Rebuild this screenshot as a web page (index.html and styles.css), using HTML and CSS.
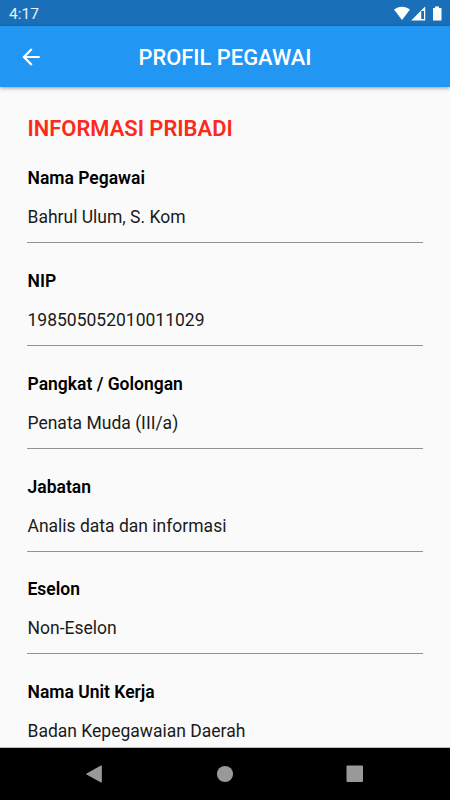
FILE: index.html
```html
<!DOCTYPE html>
<html lang="id">
<head>
<meta charset="utf-8">
<title>Profil Pegawai</title>
<link rel="stylesheet" href="styles.css">
</head>
<body>
<div class="screen">
  <div class="status">
    <span class="clock">4:17</span>
    <svg class="status-icons" width="50" height="16" viewBox="0 0 50 16" fill="#fff">
      <path d="M1 4.100C5.500.2 12.500.2 17 4.100L9 14.500z"/>
      <path fill-rule="evenodd" d="M32.200 1v14H18.200zM28.200 5.500V13.500H31V5.500z"/>
      <path d="M40 2.500h2V1h4v1.500h2.500V15H40z"/>
    </svg>
  </div>
  <header class="appbar">
    <svg class="back" width="26" height="26" viewBox="0 0 24 24" fill="#fff"><path d="M20 11H7.830l5.590-5.590L12 4l-8 8 8 8 1.410-1.410L7.830 13H20v-2z"/></svg>
    <h1 class="title">PROFIL PEGAWAI</h1>
  </header>
  <main class="content">
    <h2 class="section">INFORMASI PRIBADI</h2>
    <div class="field"><div class="label">Nama Pegawai</div><div class="value">Bahrul Ulum, S. Kom</div></div>
    <div class="field"><div class="label">NIP</div><div class="value">198505052010011029</div></div>
    <div class="field"><div class="label">Pangkat / Golongan</div><div class="value">Penata Muda (III/a)</div></div>
    <div class="field"><div class="label">Jabatan</div><div class="value">Analis data dan informasi</div></div>
    <div class="field"><div class="label">Eselon</div><div class="value">Non-Eselon</div></div>
    <div class="field"><div class="label">Nama Unit Kerja</div><div class="value">Badan Kepegawaian Daerah</div></div>
  </main>
  <nav class="navbar">
    <svg width="18" height="18" viewBox="0 0 18 18" fill="#999"><path d="M15.300.8V17.200L.6 9z" stroke="#999" stroke-linejoin="round"/></svg>
    <svg width="18" height="18" viewBox="0 0 18 18" fill="#999"><circle cx="9" cy="9" r="8.100"/></svg>
    <svg width="18" height="18" viewBox="0 0 18 18" fill="#999"><rect x=".5" y=".5" width="16.500" height="16.500" rx="1"/></svg>
  </nav>
</div>
</body>
</html>
```
FILE: styles.css
```css
* { box-sizing: border-box; margin: 0; }
body { font-family: Roboto, sans-serif; background: #fafafa; }
.screen { width: 450px; height: 800px; display: flex; flex-direction: column; overflow: hidden; }
.status { height: 26px; flex: none; background: #1a70b8; color: #e8f1f8; display: flex; justify-content: space-between; align-items: center; padding: 0 7px 0 9px; }
.status-icons { margin: -1px 0 0; transform: translateY(.5px); }
.clock { font-size: 15.500px; padding-top: 2px; }
.appbar { height: 61px; flex: none; background: #2196f3; color: #fff; display: grid; grid-template-columns: 26px 1fr 26px; align-items: center; padding: 0 18px; box-shadow: 0 1px 4px rgba(0,0,0,.4); z-index: 1; }
.title { font-size: 21.900px; font-weight: 500; text-align: center; padding-top: 2px; }
.content { flex: 1; min-height: 0; overflow: hidden; padding: 29px 27px 0; border-bottom: 1px solid #bbb; }
.section { font-size: 21.900px; line-height: 26px; font-weight: 600; color: #fb2b1c; margin-bottom: 26px; padding-left: .5px; }
.field { height: 75px; border-bottom: 1px solid #929292; margin-bottom: 27.850px; color: #1a1a1a; font-size: 17.500px; line-height: 20px; }
.label { font-weight: 600; color: #000; margin-bottom: 19px; padding-left: .5px; }
.value { font-weight: 400; padding-left: .5px; }
.navbar { height: 52px; flex: none; background: #000; display: flex; justify-content: space-between; align-items: center; padding: 0 86px; }
```
